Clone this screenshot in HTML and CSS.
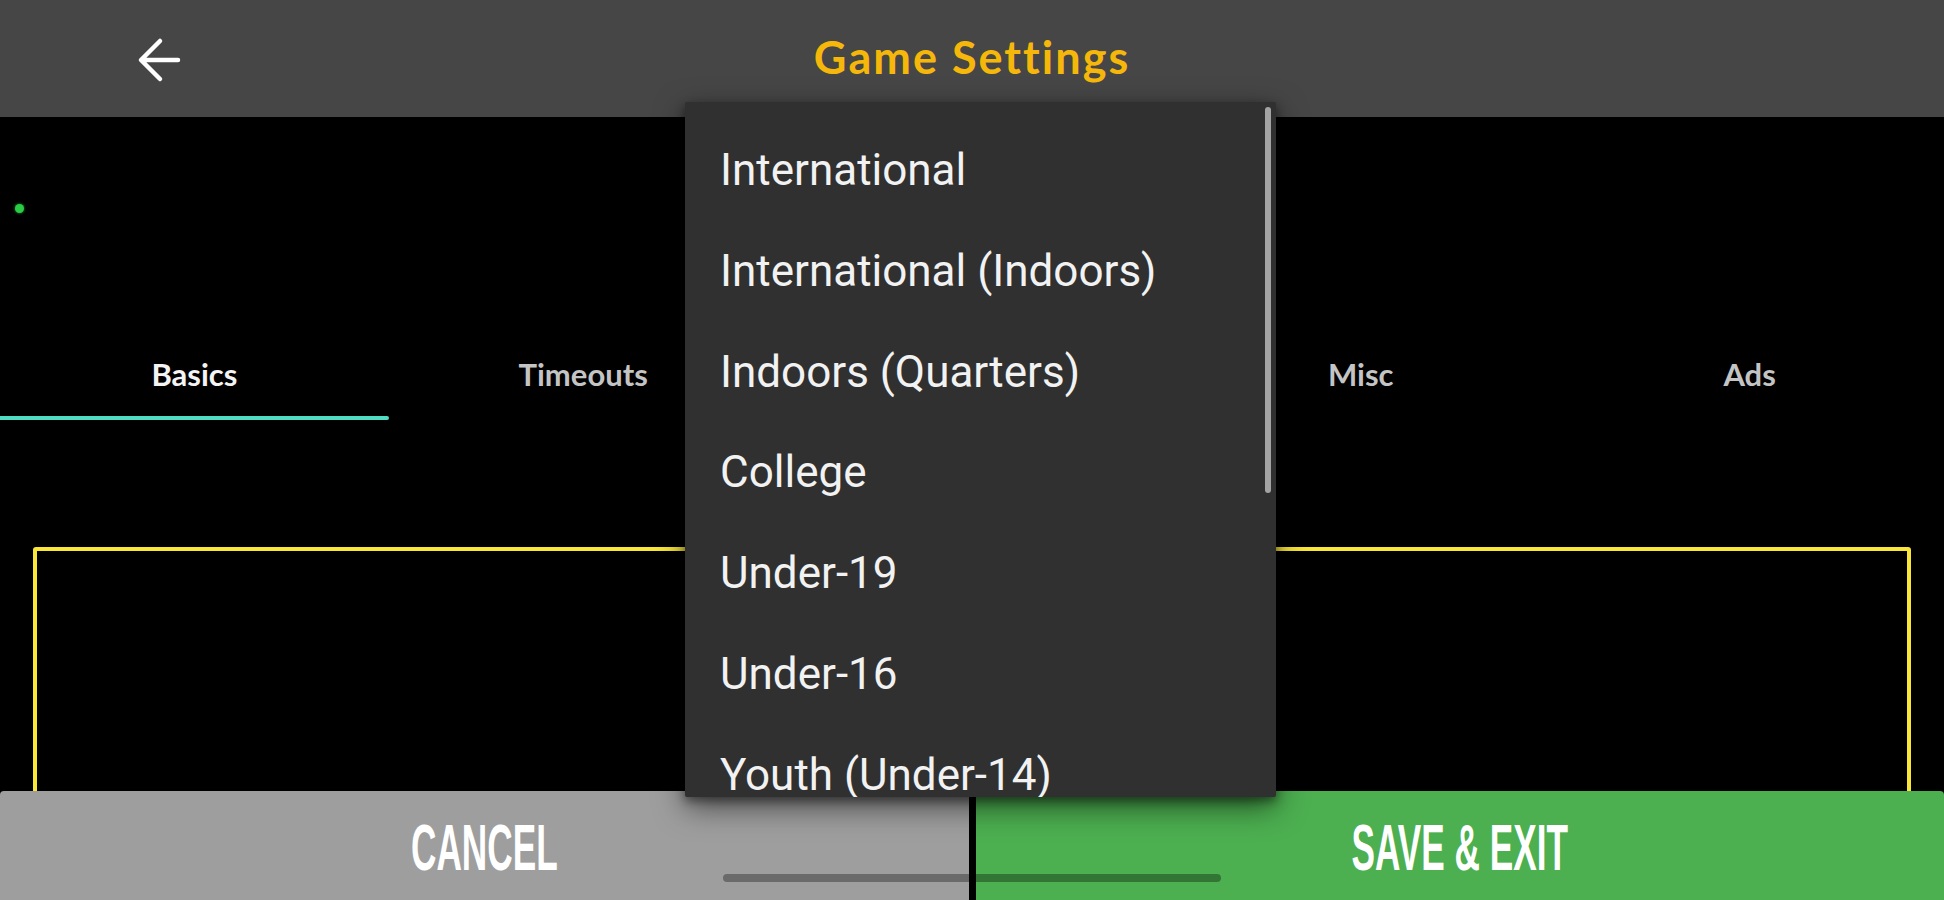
FILE: index.html
```html
<!DOCTYPE html>
<html lang="en">
<head>
<meta charset="utf-8">
<title>Game Settings</title>
<link rel="stylesheet" href="styles.css">
</head>
<body>
<div class="app">
  <header class="topbar">
    <div class="back" aria-label="Back">
      <svg width="48" height="48" viewBox="0 0 48 48" aria-hidden="true">
        <path d="M43 24 H7 M25 5 L6 24 L25 43" fill="none" stroke="#ffffff" stroke-width="4.5" stroke-linecap="round" stroke-linejoin="round"/>
      </svg>
    </div>
    <h1 class="title">Game Settings</h1>
    <div class="spacer"></div>
  </header>

  <main class="content">
    <div class="status"><span class="dot"></span></div>
    <nav class="tabs">
      <div class="tab active"><span>Basics</span></div>
      <div class="tab"><span>Timeouts</span></div>
      <div class="tab"></div>
      <div class="tab"><span>Misc</span></div>
      <div class="tab"><span>Ads</span></div>
    </nav>
    <section class="panel"></section>
  </main>

  <footer class="actions">
    <button class="btn cancel"><span class="btn-label">CANCEL</span></button>
    <div class="divider"></div>
    <button class="btn save"><span class="btn-label">SAVE &amp; EXIT</span></button>
  </footer>

  <div class="menu">
    <ul class="menu-list">
      <li class="menu-item">International</li>
      <li class="menu-item">International (Indoors)</li>
      <li class="menu-item">Indoors (Quarters)</li>
      <li class="menu-item">College</li>
      <li class="menu-item">Under-19</li>
      <li class="menu-item">Under-16</li>
      <li class="menu-item">Youth (Under-14)</li>
    </ul>
    <div class="menu-thumb"></div>
  </div>

  <div class="home-bar"></div>
</div>
</body>
</html>
```

FILE: styles.css
```css
* { box-sizing: border-box; }

html, body {
  margin: 0;
  padding: 0;
  background: #000;
}

body {
  width: 1944px;
  height: 900px;
  overflow: hidden;
  font-family: "Lato", "Roboto", sans-serif;
}

.app {
  position: relative;
  width: 1944px;
  height: 900px;
  display: flex;
  flex-direction: column;
  background: #000;
}

/* ---------- top bar ---------- */
.topbar {
  height: 117px;
  flex: 0 0 117px;
  background: #464646;
  display: grid;
  grid-template-columns: 1fr auto 1fr;
  align-items: center;
}

.back {
  padding-left: 135px;
  padding-top: 2px;
  display: flex;
  align-items: center;
}

.back svg { display: block; }

.title {
  margin: 0;
  font-family: "Lato", sans-serif;
  font-weight: 700;
  font-size: 45px;
  letter-spacing: 2px;
  color: #f6b70b;
  line-height: 1;
  padding-bottom: 2px;
}

/* ---------- content ---------- */
.content {
  flex: 1 1 auto;
  min-height: 0;
  overflow: hidden;
  display: flex;
  flex-direction: column;
}

.status {
  height: 213px;
  flex: 0 0 213px;
  padding: 87px 0 0 15px;
}

.dot {
  display: block;
  width: 9px;
  height: 9px;
  border-radius: 50%;
  background: #2bcc45;
  box-shadow: 0 0 3px rgba(43, 204, 69, 0.8);
}

.tabs {
  display: grid;
  grid-template-columns: repeat(5, 1fr);
  height: 90px;
  flex: 0 0 90px;
}

.tab {
  position: relative;
  height: 90px;
  padding-bottom: 2px;
  display: flex;
  align-items: center;
  justify-content: center;
  font-family: "Lato", sans-serif;
  font-weight: 700;
  font-size: 31px;
  color: #c4c4c4;
}

.tab.active { color: #f4f4f4; }

.tab.active::after {
  content: "";
  position: absolute;
  left: 0;
  right: 0;
  bottom: 0;
  height: 4px;
  background: #4fdcc2;
  border-radius: 0 3px 3px 0;
}

.panel {
  flex: 0 0 auto;
  margin: 127px 33px 0 33px;
  height: 500px;
  border: 4px solid #f9e636;
  border-radius: 3px;
}

/* ---------- bottom actions ---------- */
.actions {
  height: 109px;
  flex: 0 0 109px;
  display: flex;
  background: #000;
}

.btn {
  border: 0;
  margin: 0;
  padding: 0;
  display: flex;
  align-items: center;
  justify-content: center;
  color: #fff;
  font-family: "Liberation Sans", "Arial", sans-serif;
  font-weight: 700;
  font-size: 64px;
  line-height: 1;
  cursor: pointer;
}

.btn-label {
  display: inline-block;
  transform: scaleX(0.55);
  white-space: nowrap;
  padding-top: 4px;
}

.cancel {
  flex: 0 0 969px;
  background: #9e9e9e;
  border-radius: 4px 4px 0 0;
}

.divider {
  flex: 0 0 7px;
  background: #000;
}

.save {
  flex: 1 1 auto;
  background: #4caf50;
  border-radius: 4px 4px 0 0;
}

/* ---------- dropdown menu (overlay) ---------- */
.menu {
  position: absolute;
  left: 685px;
  top: 102px;
  width: 591px;
  height: 695px;
  background: #303030;
  overflow: hidden;
  box-shadow: 0 10px 30px rgba(0, 0, 0, 0.55), 0 4px 10px rgba(0, 0, 0, 0.4);
  border-radius: 2px;
}

.menu-list {
  list-style: none;
  margin: 0;
  padding: 18px 0 0 0;
}

.menu-item {
  height: 100.8px;
  line-height: 100.8px;
  padding-left: 35px;
  font-family: "Roboto", sans-serif;
  font-size: 44px;
  font-weight: 400;
  color: #f2f2f2;
  white-space: nowrap;
}

.menu-thumb {
  position: absolute;
  top: 5px;
  right: 5px;
  width: 6px;
  height: 386px;
  border-radius: 3px;
  background: #a3a3a3;
}

/* ---------- home indicator (overlay) ---------- */
.home-bar {
  position: absolute;
  left: 723px;
  top: 874px;
  width: 498px;
  height: 8px;
  border-radius: 4px;
  background: rgba(0, 0, 0, 0.33);
}
```
